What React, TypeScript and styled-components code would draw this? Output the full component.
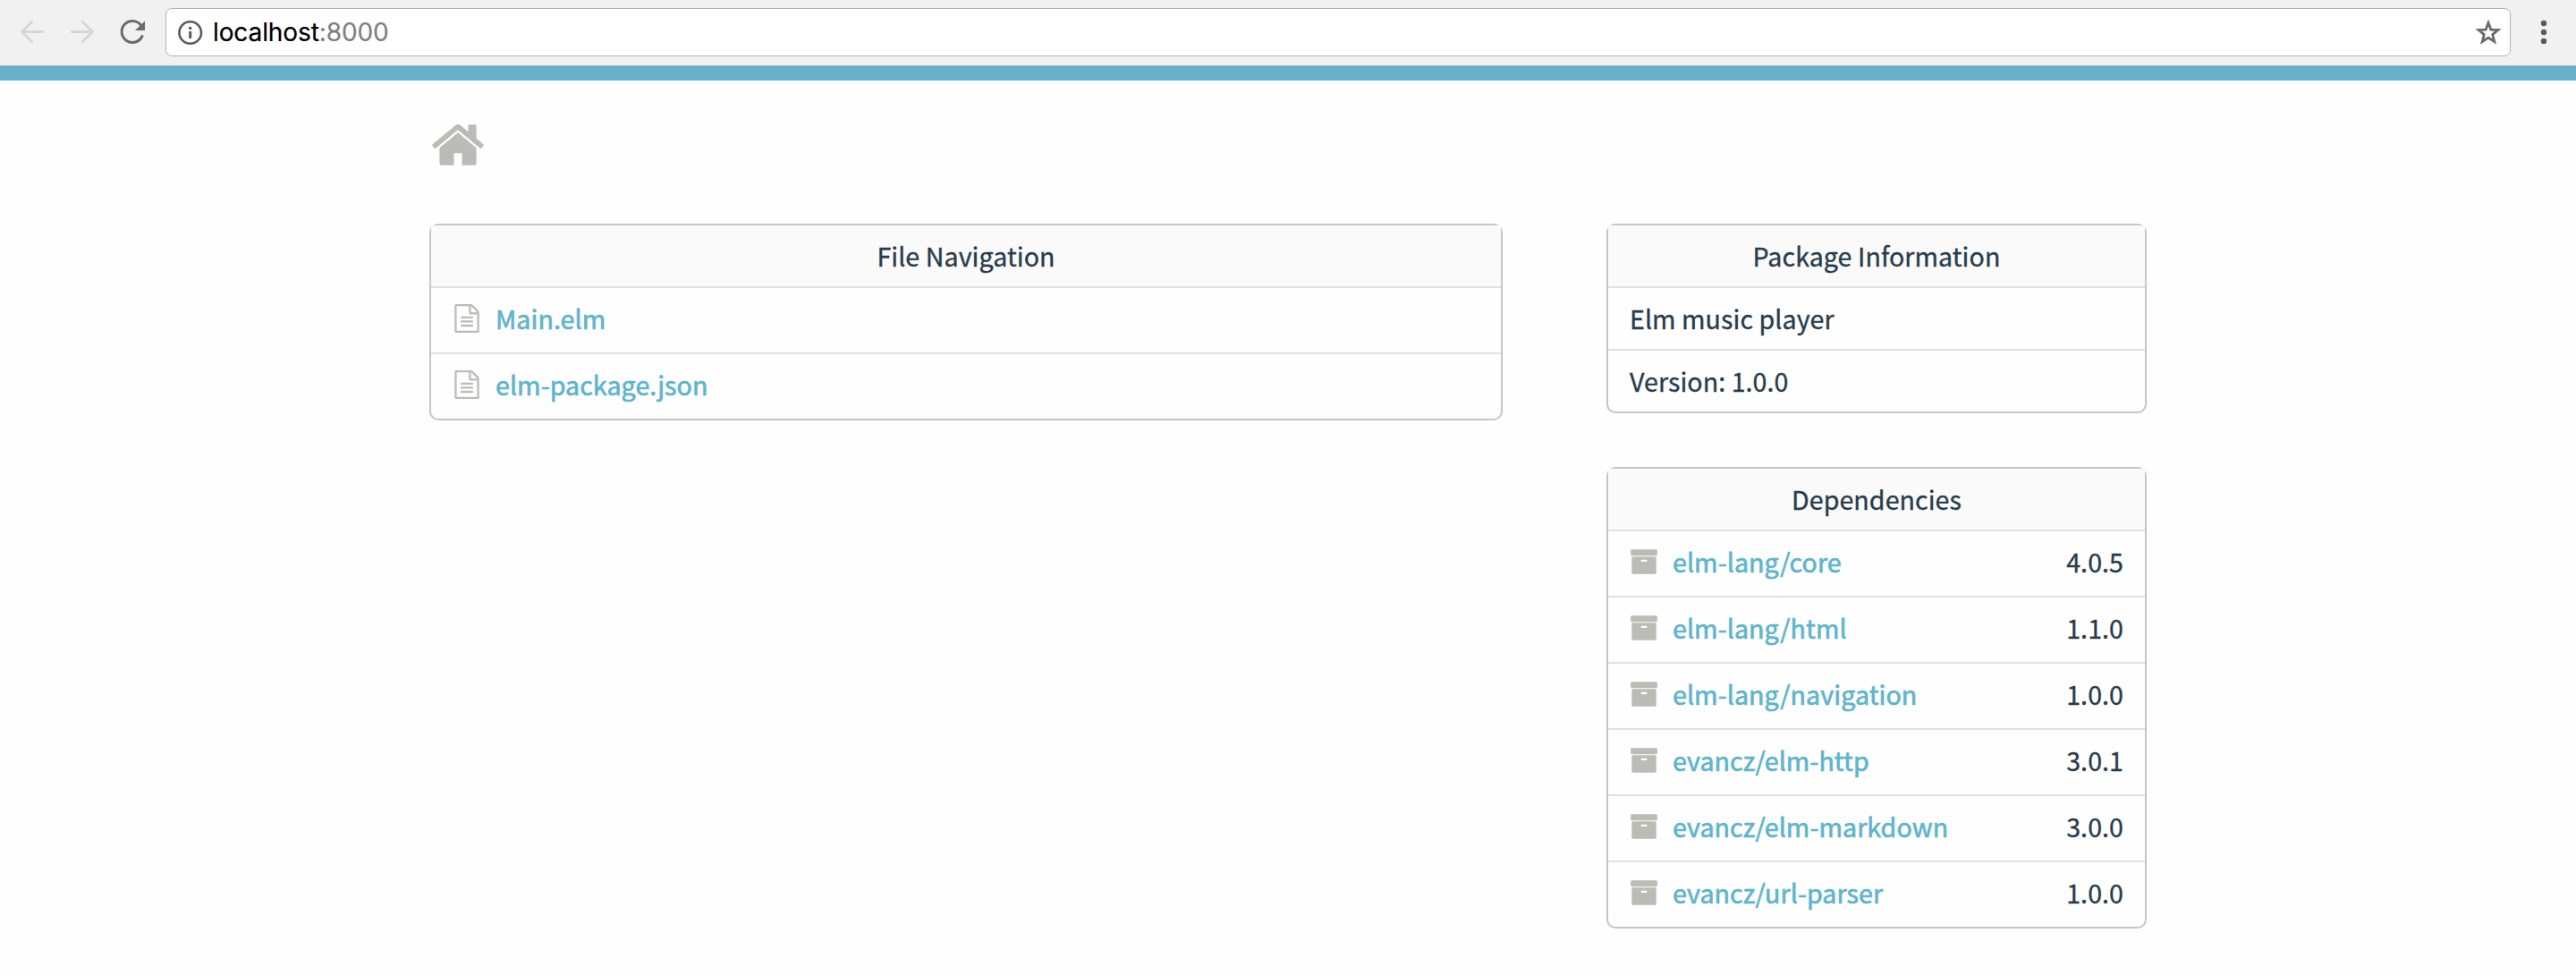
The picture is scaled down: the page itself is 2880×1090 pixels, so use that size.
import React from "react";
import styled, { createGlobalStyle } from "styled-components";

const GlobalStyle = createGlobalStyle`
  *, *::before, *::after { box-sizing: border-box; }
  body {
    margin: 0;
    background: #fefefe;
    color: #293c4b;
    font-family: "Noto Sans CJK SC", "Noto Sans", sans-serif;
    font-size: 28.6px;
    letter-spacing: 0.06px;
    -webkit-text-stroke: 0.35px currentColor;
  }
`;

const Toolbar = styled.header`
  display: flex;
  align-items: center;
  height: 74px;
  padding: 0 18px 2px 18px;
  background: #f1f1f1;
  border-bottom: 1px solid #b4b4b4;
`;

const ToolIcon = styled.svg<{ $gap?: number }>`
  flex: none;
  width: 36px;
  height: 36px;
  margin-right: ${(p) => p.$gap ?? 20}px;
`;

const AddressBar = styled.div`
  display: flex;
  align-items: center;
  flex: 1;
  height: 54px;
  padding: 0 6px 0 10px;
  background: #fff;
  border: 1px solid #b4b4b4;
  border-radius: 7px;
`;

const Url = styled.span`
  flex: 1;
  font-family: Inter, Roboto, sans-serif;
  font-size: 28px;
  line-height: 36px;
  letter-spacing: -0.1px;
  color: #000;
  -webkit-text-stroke: 0.2px currentColor;
`;

const Port = styled.span`
  color: #7f7f7f;
`;

const Menu = styled.svg`
  flex: none;
  width: 36px;
  height: 36px;
  margin-left: 19px;
`;

const Stripe = styled.div`
  height: 16px;
  background: #64b2cb;
`;

const Page = styled.main`
  width: 1920px;
  margin: 0 auto;
  padding-top: 40px;
`;

const Glyph = styled.svg<{ $size: number }>`
  display: block;
  flex: none;
  width: ${(p) => p.$size}px;
  height: ${(p) => p.$size}px;
  fill: #babcb5;
`;

const Columns = styled.div`
  display: grid;
  grid-template-columns: 1200px 604px;
  justify-content: space-between;
  align-items: start;
  margin-top: 56px;
`;

const Side = styled.div`
  display: grid;
  gap: 60px;
`;

const Panel = styled.section`
  border: 2px solid #c6c6c6;
  border-radius: 10px;
  background: #fefefe;
`;

const PanelTitle = styled.div`
  height: 68px;
  background: #fafafa;
  border-radius: 3px 3px 0 0;
  line-height: 67px;
  text-align: center;
`;

const Row = styled.div<{ $tall?: boolean }>`
  display: flex;
  align-items: flex-start;
  height: ${(p) => (p.$tall ? 74 : 70)}px;
  padding: 0 24px;
  border-top: 2px solid #e1e1e1;
  line-height: 67px;
`;

const RowIcon = styled(Glyph)`
  margin: 18px 16px 0 0;
`;

const Label = styled.a`
  flex: 1;
  color: #60b5cc;
  letter-spacing: 0.08px;
  -webkit-text-stroke: 0.7px #60b5cc;
`;

const Version = styled.span`
  flex: none;
`;

const HOME =
  "M1472 992v480q0 26-19 45t-45 19h-384v-384h-256v384h-384q-26 0-45-19t-19-45v-480q0-1 .5-3t.5-3l575-474 575 474q1 2 1 6zm223-69l-62 74q-8 9-21 11h-3q-13 0-21-7l-692-577-692 577q-12 8-24 7-13-2-21-11l-62-74q-8-10-7-23.5t11-21.5l719-599q32-26 76-26t76 26l244 204v-195q0-14 9-23t23-9h192q14 0 23 9t9 23v408l219 182q10 8 11 21.5t-7 23.5z";
const FILE =
  "M1596 380q28 28 48 76t20 88v1152q0 40-28 68t-68 28h-1344q-40 0-68-28t-28-68v-1600q0-40 28-68t68-28h896q40 0 88 20t76 48zm-444-244v376h376q-10-29-22-41l-313-313q-12-12-41-22zm384 1528v-1024h-416q-40 0-68-28t-28-68v-416h-768v1536h1280zm-1024-864q0-14 9-23t23-9h704q14 0 23 9t9 23v64q0 14-9 23t-23 9h-704q-14 0-23-9t-9-23v-64zm736 224q14 0 23 9t9 23v64q0 14-9 23t-23 9h-704q-14 0-23-9t-9-23v-64q0-14 9-23t23-9h704zm0 256q14 0 23 9t9 23v64q0 14-9 23t-23 9h-704q-14 0-23-9t-9-23v-64q0-14 9-23t23-9h704z";
const ARCHIVE =
  "M1088 832q0-26-19-45t-45-19h-256q-26 0-45 19t-19 45 19 45 45 19h256q26 0 45-19t19-45zm576-192v960q0 26-19 45t-45 19h-1408q-26 0-45-19t-19-45v-960q0-26 19-45t45-19h1408q26 0 45 19t19 45zm64-448v256q0 26-19 45t-45 19h-1536q-26 0-45-19t-19-45v-256q0-26 19-45t45-19h1536q26 0 45 19t19 45z";

const files = ["Main.elm", "elm-package.json"];

const dependencies = [
  ["elm-lang/core", "4.0.5"],
  ["elm-lang/html", "1.1.0"],
  ["elm-lang/navigation", "1.0.0"],
  ["evancz/elm-http", "3.0.1"],
  ["evancz/elm-markdown", "3.0.0"],
  ["evancz/url-parser", "1.0.0"],
];

function BrowserBar() {
  return (
    <Toolbar>
      <ToolIcon viewBox="0 0 36 36" fill="none" stroke="#d6d6d6" strokeWidth="2.8" strokeLinecap="round">
        <path d="M29.5 17.500H7M17.500 6.500L6.500 17.500l11 11" />
      </ToolIcon>
      <ToolIcon viewBox="0 0 36 36" fill="none" stroke="#d6d6d6" strokeWidth="2.8" strokeLinecap="round">
        <path d="M6.500 17.500H29M18.500 6.500l11 11-11 11" />
      </ToolIcon>
      <ToolIcon viewBox="0 0 36 36" fill="none" $gap={19}>
        <path d="M27.500 10A12 12 0 1 0 29 22.500" stroke="#6b6b6b" strokeWidth="3" strokeLinecap="round" />
        <path d="M32 5.500v10.500H21z" fill="#6b6b6b" />
      </ToolIcon>
      <AddressBar>
        <ToolIcon viewBox="0 0 36 36" fill="none" $gap={6}>
          <circle cx="16.700" cy="18.500" r="12.300" stroke="#5a5a5a" strokeWidth="2.600" />
          <path d="M15.200 12h3v3h-3zM15.200 17h3v8h-3z" fill="#5a5a5a" />
        </ToolIcon>
        <Url>
          localhost<Port>:8000</Port>
        </Url>
        <ToolIcon viewBox="0 0 36 36" fill="none" $gap={0}>
          <path
            d="M18 7.500l2.900 7.600 8 .4-6.200 5.100 2.100 7.900L18 24.100l-6.800 4.400 2.100-7.900-6.200-5.100 8-.4z"
            stroke="#6b6b6b"
            strokeWidth="2.800"
          />
        </ToolIcon>
      </AddressBar>
      <Menu viewBox="0 0 36 36" fill="#5a5a5a">
        <circle cx="18" cy="8" r="3.200" />
        <circle cx="18" cy="18" r="3.200" />
        <circle cx="18" cy="28" r="3.200" />
      </Menu>
    </Toolbar>
  );
}

export default function App() {
  return (
    <>
      <GlobalStyle />
      <BrowserBar />
      <Stripe />
      <Page>
        <Glyph $size={64} viewBox="0 0 1792 1792">
          <path d={HOME} />
        </Glyph>
        <Columns>
          <Panel>
            <PanelTitle>File Navigation</PanelTitle>
            {files.map((name) => (
              <Row key={name} $tall>
                <RowIcon $size={32} viewBox="0 0 1792 1792">
                  <path d={FILE} />
                </RowIcon>
                <Label>{name}</Label>
              </Row>
            ))}
          </Panel>
          <Side>
            <Panel>
              <PanelTitle>Package Information</PanelTitle>
              <Row>Elm music player</Row>
              <Row>Version: 1.0.0</Row>
            </Panel>
            <Panel>
              <PanelTitle>Dependencies</PanelTitle>
              {dependencies.map(([name, version]) => (
                <Row key={name} $tall>
                  <RowIcon $size={32} viewBox="0 0 1792 1792">
                    <path d={ARCHIVE} />
                  </RowIcon>
                  <Label>{name}</Label>
                  <Version>{version}</Version>
                </Row>
              ))}
            </Panel>
          </Side>
        </Columns>
      </Page>
    </>
  );
}
